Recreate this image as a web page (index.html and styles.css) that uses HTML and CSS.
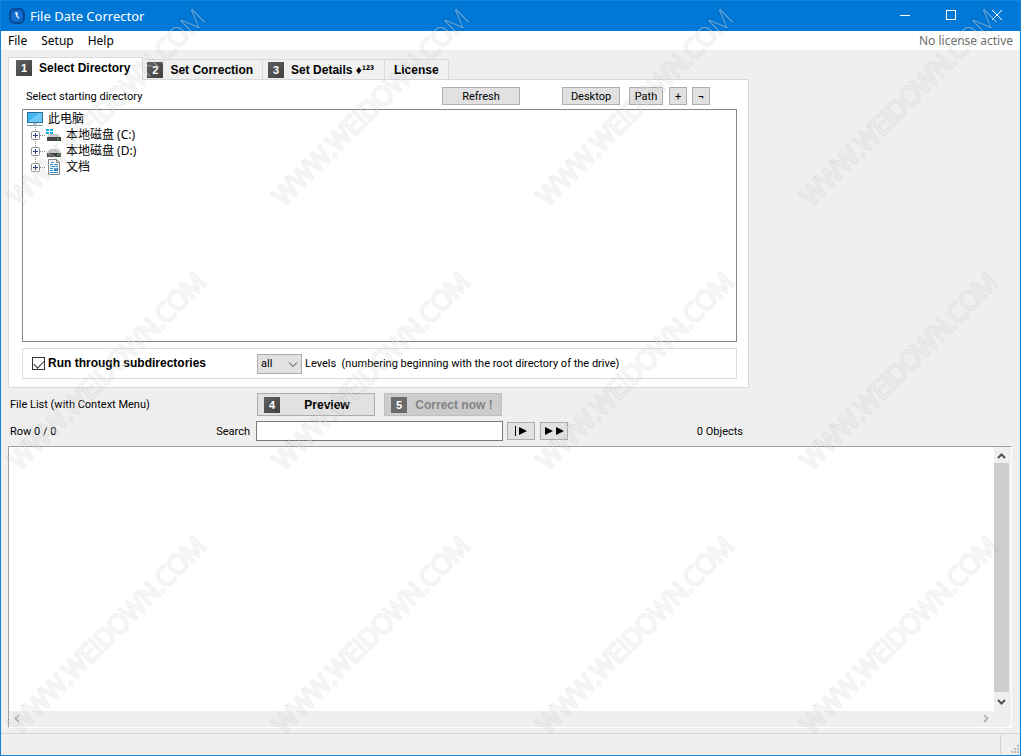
FILE: index.html
```
<!DOCTYPE html>
<html lang="en">
<head>
<meta charset="utf-8">
<title>File Date Corrector</title>
<link rel="stylesheet" href="styles.css">
</head>
<body>
<div class="window">
  <header class="titlebar">
    <svg class="app-icon" width="16" height="16" viewBox="0 0 16 16" fill="none"><rect x="1" y="1" width="14" height="14" rx="4" fill="#0c63c4" stroke="#063f86" stroke-width="1.5"/><circle cx="8" cy="8" r="5.2" fill="#1670d2"/><path d="M8 4v4.500l2 1.500M6.500 4.500L8 8" stroke="#fff" stroke-width="1.1"/></svg>
    <h1 class="title">File Date Corrector</h1>
    <div class="window-buttons">
      <button class="win-btn" aria-label="Minimize"><svg width="12" height="12" stroke="#fff" fill="none"><path d="M1 5.500h10"/></svg></button>
      <button class="win-btn" aria-label="Maximize"><svg width="12" height="12" stroke="#fff" fill="none"><rect x="1.500" y=".5" width="9" height="9"/></svg></button>
      <button class="win-btn" aria-label="Close"><svg width="12" height="12" stroke="#fff" fill="none"><path d="M1 0l10 10M11 0L1 10"/></svg></button>
    </div>
  </header>
  <nav class="menubar">
    <button class="menu">File</button>
    <button class="menu">Setup</button>
    <button class="menu">Help</button>
    <span class="license">No license active</span>
  </nav>
  <main class="content">
    <section class="form">
      <div class="tabs" role="tablist">
        <button class="tab active" role="tab" aria-selected="true"><span class="num">1</span>Select Directory</button>
        <button class="tab" role="tab"><span class="num">2</span>Set Correction</button>
        <button class="tab" role="tab"><span class="num">3</span><span>Set Details <span class="marks">♦¹²³</span></span></button>
        <button class="tab" role="tab">License</button>
      </div>
      <div class="panel" role="tabpanel">
        <div class="toolbar">
          <span>Select starting directory</span>
          <div class="toolbar-buttons">
            <button class="btn refresh">Refresh</button>
            <button class="btn desktop">Desktop</button>
            <button class="btn path">Path</button>
            <button class="btn square">+</button>
            <button class="btn square">¬</button>
          </div>
        </div>
        <ul class="tree">
          <li class="node root"><svg width="18" height="16" viewBox="0 0 18 16"><rect x="1.500" y="1.500" width="15" height="10" fill="#45b5ef" stroke="#2f6f95"/><path d="M2 11L13 2h3v9z" fill="#6bcaf8"/><path d="M7 12h4v2H7z" fill="#b8cbd6"/><path d="M1 14.500h16" stroke="#7f9bb0"/></svg>此电脑</li>
          <li class="node"><svg width="31" height="16" viewBox="0 0 31 16" fill="none"><path d="M5.500 0v16M10 8.500h6" stroke="#8c8c8c" stroke-dasharray="1 1"/><rect x="1.500" y="4.500" width="8" height="8" rx="1" fill="#fafafa" stroke="#8f8f8f"/><path d="M3 8.500h5M5.500 6v5" stroke="#2c3f80"/><path d="M16 2h3v2h-3zM20 2h3v2h-3zM16 5h3v2h-3zM20 5h3v2h-3z" fill="#00aeea"/><path d="M19 7h9l3 4H17z" fill="#c8c8c8"/><path d="M17 10h14v4H17z" fill="#444"/><path d="M27 12h2" stroke="#54e65b"/></svg>本地磁盘 (C:)</li>
          <li class="node"><svg width="31" height="16" viewBox="0 0 31 16" fill="none"><path d="M5.500 0v16M10 8.500h6" stroke="#8c8c8c" stroke-dasharray="1 1"/><rect x="1.500" y="4.500" width="8" height="8" rx="1" fill="#fafafa" stroke="#8f8f8f"/><path d="M3 8.500h5M5.500 6v5" stroke="#2c3f80"/><path d="M20 6h8l3 4H17z" fill="#c8c8c8"/><path d="M17 10h14v4H17z" fill="#444"/><path d="M27 12h2" stroke="#54e65b"/></svg>本地磁盘 (D:)</li>
          <li class="node"><svg width="31" height="16" viewBox="0 0 31 16" fill="none"><path d="M5.500 0v5M10 8.500h6" stroke="#8c8c8c" stroke-dasharray="1 1"/><rect x="1.500" y="4.500" width="8" height="8" rx="1" fill="#fafafa" stroke="#8f8f8f"/><path d="M3 8.500h5M5.500 6v5" stroke="#2c3f80"/><path d="M18.500 .5h8l3 3v12h-11z" fill="#fff" stroke="#858585"/><path d="M26.500 .5v3h3" stroke="#858585"/><path d="M20 5.500h3M24 5.500h4M20 7.500h8M20 9.500h3M20 11.500h3M20 13.500h8M21 3.500h3" stroke="#1e93d6"/><path d="M24 9h4v3h-4z" fill="#2677b8"/></svg>文档</li>
        </ul>
        <div class="group">
          <label class="check"><input type="checkbox" checked>Run through subdirectories</label>
          <span class="select-wrap"><select id="levels" class="select"><option>all</option></select><svg class="chevron" width="10" height="6" fill="none" stroke="#444"><path d="M1 .5l4 4 4-4"/></svg></span>
          <label class="levels" for="levels">Levels&nbsp; (numbering beginning with the root directory of the drive)</label>
        </div>
      </div>
      <div class="row actions">
        <span class="first">File List (with Context Menu)</span>
        <button class="btn big"><span class="num">4</span><span class="caption">Preview</span></button>
        <button class="btn big" disabled><span class="num">5</span><span class="caption">Correct now !</span></button>
      </div>
      <div class="row search">
        <div class="first"><span>Row 0 / 0</span><label for="search">Search</label></div>
        <input id="search" class="field" type="text">
        <button class="btn step" aria-label="Find first"><svg width="14" height="10"><path d="M1 0h1v10H1zM5 1l8 4-8 4z"/></svg></button>
        <button class="btn step" aria-label="Find next"><svg width="20" height="10"><path d="M1 1l8 4-8 4zM12 1l8 4-8 4z"/></svg></button>
        <span class="count">0 Objects</span>
      </div>
    </section>
    <section class="list" aria-label="File list">
      <div class="list-body"></div>
      <div class="vbar"><svg width="15" height="16" fill="none" stroke="#505050" stroke-width="2"><path d="M4 11l3.500-3.500L11 11"/></svg><div class="thumb"></div><svg width="15" height="19" fill="none" stroke="#505050" stroke-width="2"><path d="M4 8l3.500 3.500L11 8"/></svg></div>
      <div class="hbar"><svg width="15" height="15" fill="none" stroke="#b8b8b8" stroke-width="2"><path d="M10 4L6.500 7.500 10 11"/></svg><svg width="15" height="15" fill="none" stroke="#b8b8b8" stroke-width="2"><path d="M5 4l3.500 3.500L5 11"/></svg></div>
    </section>
  </main>
  <footer class="status"><div class="grip"><svg width="9" height="9" fill="#bcbcbc"><path d="M6 0h2v2H6zM3 3h2v2H3zM6 3h2v2H6zM0 6h2v2H0zM3 6h2v2H3zM6 6h2v2H6z"/></svg></div></footer>
  <svg class="watermark" width="100%" height="100%" aria-hidden="true">
    <defs><pattern id="mark" width="264" height="264" patternUnits="userSpaceOnUse">
      <g transform="translate(19 207) rotate(-45)" fill="none" stroke-linejoin="round">
        <text class="mark-text" stroke="#000" stroke-opacity=".05" stroke-width="3">WWW.WEIDOWN.COM</text>
        <text class="mark-text" fill="#fff" fill-opacity=".35">WWW.WEIDOWN.COM</text>
      </g>
    </pattern></defs>
    <rect width="100%" height="100%" fill="url(#mark)"/>
  </svg>
</div>
</body>
</html>
```
FILE: styles.css
```
* { box-sizing: border-box; }
body { margin: 0; font: 11px/17px Roboto, "Noto Sans CJK SC", sans-serif; color: #000; }
button, input, select { font: inherit; color: inherit; margin: 0; }
.window { position: relative; display: flex; flex-direction: column; min-height: 100vh; background: #efefef; border: 1px solid #1883d7; border-top: 0; }
.titlebar { display: flex; align-items: center; height: 31px; padding-left: 8px; background: #0078d7; border-top: 1px solid #1883d7; color: #fff; }
.title { margin: 0 0 0 5px; font: 13px/18px "Noto Sans", sans-serif; }
.window-buttons { display: flex; margin-left: auto; }
.win-btn { display: flex; align-items: center; justify-content: center; width: 46px; height: 30px; padding: 0; border: 0; background: none; }
.menubar { display: flex; align-items: center; gap: 14px; height: 19px; padding: 0 7px; background: #fff; font: 12px/16px "Noto Sans", sans-serif; }
.menu { padding: 0; border: 0; background: none; }
.license { margin-left: auto; color: #6d6d6d; }
.content { flex: 1; display: flex; flex-direction: column; padding: 7px 8px 5px 7px; }
.form { max-width: 741px; }
.tabs { display: flex; align-items: flex-end; }
.tab { display: flex; align-items: center; gap: 7px; height: 20px; padding: 0 9px 0 4px; border: 1px solid #d9d9d9; border-width: 1px 1px 0 0; background: #f0f0f0; font: bold 12px/16px "Liberation Sans", Arial, sans-serif; white-space: nowrap; }
.tab:last-child { padding: 0 9px; }
.tab:nth-child(3) { padding: 0 10px 0 5px; }
.tab.active { height: 23px; margin-bottom: -1px; padding: 0 12px 2px 7px; border-left-width: 1px; background: #fff; z-index: 1; }
.marks { font-size: 12px; }
.num { flex: none; width: 16px; height: 16px; background: linear-gradient(135deg, #606060, #404040); color: #fff; font: bold 11px/16px "Liberation Sans", Arial, sans-serif; text-align: center; }
.panel { padding: 7px 11px 8px 13px; border: 1px solid #d9d9d9; background: #fff; }
.toolbar { display: flex; justify-content: space-between; align-items: center; padding: 0 27px 0 4px; }
.toolbar-buttons { display: flex; }
.btn { display: flex; align-items: center; justify-content: center; height: 18px; padding: 0; border: 1px solid #adadad; background: #e1e1e1; }
.refresh { width: 78px; margin-right: 42px; }
.desktop { width: 58px; margin-right: 9px; }
.path { width: 34px; margin-right: 6px; }
.square { width: 18px; }
.square + .square { margin-left: 5px; }
.tree { height: 233px; margin: 4px 0 6px; padding: 1px 0 0 7px; border: 1px solid #828790; list-style: none; font: 12px/18px "Noto Sans", "Noto Sans CJK SC", sans-serif; }
.node { display: flex; align-items: center; gap: 5px; height: 16px; white-space: nowrap; }
.root { margin-left: -4px; gap: 4px; }
.group { display: flex; align-items: center; height: 31px; padding-left: 9px; border: 1px solid #dcdcdc; }
.check { display: flex; align-items: center; gap: 3px; width: 225px; font: bold 12px/17px "Liberation Sans", Arial, sans-serif; }
.check input { appearance: none; width: 13px; height: 13px; border: 1px solid #333; background: #fff; display: grid; place-items: center; }
.check input:checked::before { content: ""; width: 9px; height: 5px; margin-top: -2px; border: solid #333; border-width: 0 0 1px 1px; transform: rotate(-45deg); }
.select-wrap { position: relative; display: flex; }
.select { appearance: none; width: 45px; height: 20px; padding: 0 3px; border: 1px solid #adadad; border-radius: 0; background: #e1e1e1; }
.chevron { position: absolute; right: 4px; top: 8px; pointer-events: none; }
.levels { margin-left: 3px; }
.row { display: flex; align-items: center; }
.actions { margin-top: 5px; }
.search { margin: 5px 0; }
.first { display: flex; justify-content: space-between; width: 249px; padding: 0 7px 0 2px; }
.search .first { width: 248px; padding-right: 6px; }
.big { width: 118px; height: 23px; padding-left: 6px; }
.big + .big { margin-left: 9px; }
.caption { flex: 1; font: bold 12px/16px "Liberation Sans", Arial, sans-serif; }
.big:disabled { background: #ccc; border-color: #bfbfbf; color: #838383; }
.big:disabled .num { background: #6b6b6b; }
.field { width: 247px; height: 20px; padding: 0 3px; border: 1px solid #7a7a7a; background: #fff; }
.step { width: 28px; margin-left: 4px; }
.step + .step { margin-left: 5px; }
.count { margin-left: auto; padding-right: 6px; }
.list { flex: 1; display: grid; grid-template: 1fr 16px / 1fr 17px; min-height: 200px; border: 1px solid #a0a0a0; border-right-color: #fff; border-bottom-color: #fff; }
.list-body { background: #fff; }
.vbar { display: flex; flex-direction: column; }
.thumb { flex: 1; width: 15px; background: #cdcdcd; }
.hbar { display: flex; justify-content: space-between; grid-column: 1; }
.status { display: flex; justify-content: flex-end; height: 22px; border-top: 1px solid #d7d7d7; }
.grip { display: flex; align-items: flex-end; justify-content: flex-end; width: 20px; margin: 1px 0; border-left: 1px solid #d0d0d0; }
.watermark { position: absolute; inset: 0; pointer-events: none; z-index: 2; }
.mark-text { font: 300 26px "Open Sans", "Noto Sans", sans-serif; }
```
